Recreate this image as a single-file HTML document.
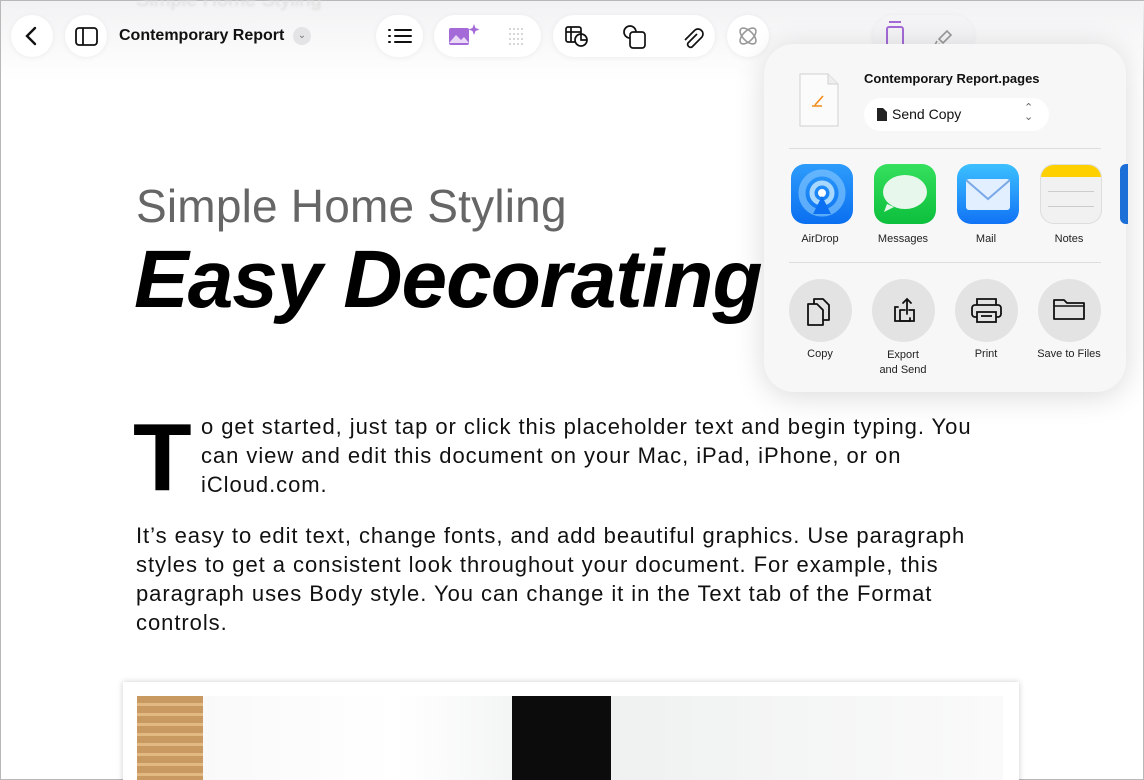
<!DOCTYPE html>
<html><head><meta charset="utf-8"><style>
*{margin:0;padding:0;box-sizing:border-box}
html{width:1144px;height:780px;overflow:hidden}
body{width:1144px;height:780px;overflow:hidden;background:#fff;font-family:"Liberation Sans",sans-serif;position:relative;border:1px solid #b8b8b8}
.abs{position:absolute}
.topfade{position:absolute;left:0;top:0;width:1144px;height:80px;background:linear-gradient(#f2f2f4,rgba(255,255,255,0))}
.pill{position:absolute;top:14px;height:42px;background:#fff;border-radius:21px;box-shadow:0 1px 6px rgba(0,0,0,.06)}
.h1{position:absolute;left:135px;top:178px;font-size:46px;color:#666;letter-spacing:.2px}
.h2{position:absolute;left:133px;top:232px;font-size:82px;font-weight:bold;font-style:italic;letter-spacing:-1px;color:#000}
.body{position:absolute;left:135px;font-size:22px;line-height:29px;color:#111;letter-spacing:.95px;white-space:nowrap}
.pop{position:absolute;left:763px;top:43px;width:362px;height:348px;background:#f7f7f7;border-radius:30px;box-shadow:0 4px 30px rgba(0,0,0,.15)}
.app{position:absolute;top:120px;width:62px;height:60px;border-radius:14px}
.lbl{position:absolute;font-size:11px;color:#222;text-align:center;width:90px}
.circ{position:absolute;top:235px;width:63px;height:63px;border-radius:50%;background:#e3e3e3}
</style></head><body>
<div class="topfade"></div>
<div class="abs" style="left:135px;top:-12px;font-size:20px;color:#ddd;filter:blur(1px)">Simple Home Styling</div>
<div class="pill" style="left:10px;width:42px"><svg width="42" height="42"><path d="M24 13l-8 8 8 8" stroke="#111" stroke-width="2.4" fill="none" stroke-linecap="round"/></svg></div>
<div class="pill" style="left:64px;width:42px"><svg width="42" height="42"><rect x="11" y="13" width="21" height="17" rx="3" stroke="#111" stroke-width="1.8" fill="none"/><line x1="18" y1="13" x2="18" y2="30" stroke="#111" stroke-width="1.8"/></svg></div>
<div class="abs" style="left:118px;top:26px;font-size:16px;font-weight:bold;color:#111">Contemporary Report</div>
<div class="abs" style="left:292px;top:26px;width:18px;height:18px;border-radius:9px;background:#e4e4e6;font-size:10px;text-align:center;line-height:18px;color:#777">⌄</div>
<div class="pill" style="left:375px;width:47px"><svg width="47" height="42"><g stroke="#111" stroke-width="2" stroke-linecap="round"><line x1="19" y1="15" x2="35" y2="15"/><line x1="19" y1="21" x2="35" y2="21"/><line x1="19" y1="27" x2="35" y2="27"/><line x1="13" y1="15" x2="14" y2="15"/><line x1="13" y1="21" x2="14" y2="21"/><line x1="13" y1="27" x2="14" y2="27"/></g></svg></div>
<div class="pill" style="left:433px;width:107px"><svg width="107" height="42"><rect x="15" y="13" width="20" height="17" rx="2" fill="#a46ad8"/><path d="M15 28l7-8 5 5 3-3 5 6z" fill="#e9d9f7"/><path d="M40 9l1.5 4 4 1.5-4 1.5-1.5 4-1.5-4-4-1.5 4-1.5z" fill="#a46ad8"/><g fill="#bbb"><circle cx="76" cy="14" r=".9"/><circle cx="80" cy="14" r=".9"/><circle cx="84" cy="14" r=".9"/><circle cx="88" cy="14" r=".9"/><circle cx="76" cy="19" r=".9"/><circle cx="80" cy="19" r=".9"/><circle cx="84" cy="19" r=".9"/><circle cx="88" cy="19" r=".9"/><circle cx="76" cy="24" r=".9"/><circle cx="80" cy="24" r=".9"/><circle cx="84" cy="24" r=".9"/><circle cx="88" cy="24" r=".9"/><circle cx="76" cy="29" r=".9"/><circle cx="80" cy="29" r=".9"/><circle cx="84" cy="29" r=".9"/><circle cx="88" cy="29" r=".9"/></g></svg></div>
<div class="pill" style="left:552px;width:162px"><svg width="162" height="42"><g stroke="#111" stroke-width="1.7" fill="none"><rect x="13" y="12" width="15" height="15" rx="2"/><line x1="13" y1="17" x2="28" y2="17"/><line x1="18" y1="12" x2="18" y2="27"/><circle cx="28" cy="25" r="6" fill="#fff"/><path d="M28 19v6h6"/><rect x="77" y="17" width="15" height="16" rx="3"/><path d="M77 23a6 6 0 1 1 6-6"/><path d="M144 19l-9 9a3 3 0 0 0 4 4l10-10a5 5 0 0 0-7-7l-10 10"/></g></svg></div>
<div class="pill" style="left:726px;width:42px"><svg width="42" height="42"><g stroke="#999" stroke-width="1.6" fill="none"><ellipse cx="21" cy="21" rx="10" ry="5" transform="rotate(45 21 21)"/><ellipse cx="21" cy="21" rx="10" ry="5" transform="rotate(-45 21 21)"/></g></svg></div>
<div class="pill" style="left:872px;width:101px;background:#f4f4f6"><svg width="101" height="42"><g stroke="#a46ad8" stroke-width="2" fill="none"><rect x="14" y="12" width="16" height="22" rx="2"/><line x1="16" y1="7" x2="28" y2="7"/></g><path d="M66 24l8-8 4 4-8 8zM64 26l-3 6 6-3" stroke="#999" stroke-width="1.6" fill="none"/></svg></div>
<div class="h1">Simple Home Styling</div>
<div class="h2">Easy Decorating</div>
<div class="abs" style="left:132px;top:409px;font-size:96px;font-weight:bold;line-height:1">T</div>
<div class="body" style="top:411px;left:200px">o get started, just tap or click this placeholder text and begin typing. You<br>can view and edit this document on your Mac, iPad, iPhone, or on<br>iCloud.com.</div>
<div class="body" style="top:520px">It’s easy to edit text, change fonts, and add beautiful graphics. Use paragraph<br>styles to get a consistent look throughout your document. For example, this<br>paragraph uses Body style. You can change it in the Text tab of the Format<br>controls.</div>
<div class="abs" style="left:122px;top:681px;width:896px;height:110px;background:#fff;box-shadow:0 0 6px rgba(0,0,0,.2)"></div>
<div class="abs" style="left:136px;top:695px;width:866px;height:90px;background:linear-gradient(90deg,#f7f7f7,#fff 30%,#eef0f0 50%,#fafafa)"></div>
<div class="abs" style="left:136px;top:695px;width:66px;height:90px;background:repeating-linear-gradient(#c89a62 0 7px,#e2b983 7px 10px)"></div>
<div class="abs" style="left:511px;top:695px;width:99px;height:90px;background:#0c0c0c"></div>
<div class="pop">
<svg class="abs" style="left:34px;top:28px" width="42" height="56"><path d="M2 2h28l10 10v42H2z" fill="#fbfbfb" stroke="#d0d0d0"/><path d="M30 2v10h10" fill="#eee" stroke="#d0d0d0"/><path d="M17 33l8-9M14 34h10" stroke="#f28a16" stroke-width="1.6"/></svg>
<div class="abs" style="left:100px;top:27px;font-size:13px;font-weight:bold;color:#111">Contemporary Report.pages</div>
<div class="abs" style="left:100px;top:54px;width:185px;height:33px;border-radius:17px;background:#fff"><svg class="abs" style="left:13px;top:10px" width="10" height="13"><path d="M0 0h6l4 4v9H0z" fill="#222"/></svg><span class="abs" style="left:28px;top:8px;font-size:14px;color:#111">Send Copy</span><span class="abs" style="left:160px;top:6px;font-size:11px;color:#666;line-height:9px">⌃<br>⌄</span></div>
<div class="abs" style="left:25px;top:104px;width:312px;height:1px;background:#ddd"></div>
<div class="app" style="left:27px;background:linear-gradient(#2d9cfb,#0a6ff0)"><svg width="62" height="60"><circle cx="31" cy="29" r="20" fill="none" stroke="#7cc2ff" stroke-width="7" opacity=".7"/><circle cx="31" cy="29" r="10" fill="none" stroke="#a9d8ff" stroke-width="5"/><circle cx="31" cy="29" r="4" fill="#fff"/><path d="M22 50l9-18 9 18z" fill="#0a6ff0"/></svg></div>
<div class="app" style="left:110px;background:linear-gradient(#35e05d,#0cbf3c)"><svg width="62" height="60"><ellipse cx="31" cy="28" rx="22" ry="17" fill="#e8f7eb"/><path d="M13 40l-3 8 10-5z" fill="#e8f7eb"/></svg></div>
<div class="app" style="left:193px;background:linear-gradient(#3cc0ff,#1173f5)"><svg width="62" height="60"><rect x="9" y="15" width="44" height="31" rx="3" fill="#e2efff"/><path d="M9 16l22 19 22-19" stroke="#7aa9e8" stroke-width="2" fill="none"/></svg></div>
<div class="app" style="left:276px;background:#f1f1f1;border:1px solid #ddd;overflow:hidden"><div style="height:12px;background:#ffd000"></div><div style="margin:14px 7px 0;height:1px;background:#ccc"></div><div style="margin:14px 7px 0;height:1px;background:#ccc"></div></div>
<div class="app" style="left:356px;width:8px;background:#1d6fd8;border-radius:6px 0 0 6px"></div>
<div class="lbl" style="left:11px;top:189px">AirDrop</div>
<div class="lbl" style="left:94px;top:189px">Messages</div>
<div class="lbl" style="left:177px;top:189px">Mail</div>
<div class="lbl" style="left:260px;top:189px">Notes</div>
<div class="abs" style="left:25px;top:218px;width:312px;height:1px;background:#ddd"></div>
<div class="circ" style="left:25px"><svg width="63" height="63"><g stroke="#111" stroke-width="1.8" fill="none" stroke-linejoin="round"><path d="M25 20h9l6 6v15H25z"/><path d="M19 25h9l6 6v15H19z" fill="#e3e3e3"/></g></svg></div>
<div class="circ" style="left:108px"><svg width="63" height="63"><g stroke="#111" stroke-width="1.8" fill="none" stroke-linecap="round"><path d="M26 28h-3v14h15v-3"/><path d="M28 31v11h14V31h-5M33 31h-5"/><path d="M35 20v15M31 24l4-4 4 4"/></g></svg></div>
<div class="circ" style="left:191px"><svg width="63" height="63"><g stroke="#111" stroke-width="1.8" fill="none"><rect x="17" y="26" width="29" height="12" rx="3"/><path d="M22 26v-6h19v6"/><rect x="22" y="33" width="19" height="10" fill="#e3e3e3"/><line x1="26" y1="37" x2="37" y2="37"/></g></svg></div>
<div class="circ" style="left:274px"><svg width="63" height="63"><path d="M16 21h10l3 3h17v16H16z" stroke="#111" stroke-width="1.8" fill="none" stroke-linejoin="round"/><line x1="16" y1="27" x2="46" y2="27" stroke="#111" stroke-width="1.5"/></svg></div>
<div class="lbl" style="left:11px;top:304px">Copy</div>
<div class="lbl" style="left:94px;top:304px;line-height:15px">Export<br>and Send</div>
<div class="lbl" style="left:177px;top:304px">Print</div>
<div class="lbl" style="left:260px;top:304px">Save to Files</div>
</div>
</body></html>
